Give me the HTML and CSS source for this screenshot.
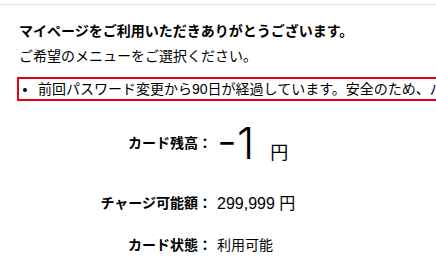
FILE: index.html
```html
<!DOCTYPE html>
<html lang="ja">
<head>
<meta charset="utf-8">
<link rel="stylesheet" href="styles.css">
</head>
<body>
<div class="topbar"></div>
<main class="content">
  <p class="greeting">マイページをご利用いただきありがとうございます。</p>
  <p class="sub">ご希望のメニューをご選択ください。</p>
  <ul class="alert">
    <li>前回パスワード変更から90日が経過しています。安全のため、パスワードの変更をお願いします。</li>
  </ul>
  <dl class="info">
    <div class="row row-balance">
      <dt>カード残高：</dt>
      <dd><span class="big">-1</span><span class="yen">円</span></dd>
    </div>
    <div class="row">
      <dt>チャージ可能額：</dt>
      <dd class="amount">299,999 円</dd>
    </div>
    <div class="row">
      <dt>カード状態：</dt>
      <dd class="status">利用可能</dd>
    </div>
  </dl>
</main>
</body>
</html>
```
FILE: styles.css
```css
html, body {
  margin: 0;
  padding: 0;
  overflow: hidden;
  background: #fff;
}
body {
  font-family: "Liberation Sans", "Noto Sans CJK JP", sans-serif;
  color: #000;
  font-size: 14px;
}
.topbar {
  height: 4px;
  border-bottom: 1px solid #e2e2e2;
}
.content {
  padding-left: 19px;
}
.greeting {
  margin: 14px 0 0;
  font-weight: bold;
  line-height: 25px;
}
.sub {
  margin: 0;
  line-height: 25px;
}
.alert {
  list-style: none;
  margin: 8px 0 0 -2px;
  padding: 0 0 0 19px;
  border: 2px solid #e60012;
  width: max-content;
  white-space: nowrap;
}
.alert li {
  position: relative;
  line-height: 20px;
}
.alert li::before {
  content: "";
  position: absolute;
  left: -15px;
  top: 9px;
  width: 4px;
  height: 4px;
  border-radius: 50%;
  background: #000;
}
.info {
  margin: 1px 0 0;
}
.row {
  display: flex;
  align-items: center;
  min-height: 42px;
}
.row-balance {
  min-height: 79px;
}
.row dt {
  width: 193px;
  text-align: right;
  font-weight: bold;
}
.row dd {
  margin: 0 0 0 5px;
}
.row-balance dd {
  font-size: 18px;
  padding-top: 3px;
}
.big {
  font-family: "Inter", "Liberation Sans", sans-serif;
  font-weight: 300;
  font-size: 44px;
  margin-right: 16px;
}
.yen {
  font-size: 18px;
}
.amount {
  font-size: 16px;
}
.status {
  font-size: 14px;
}
```
